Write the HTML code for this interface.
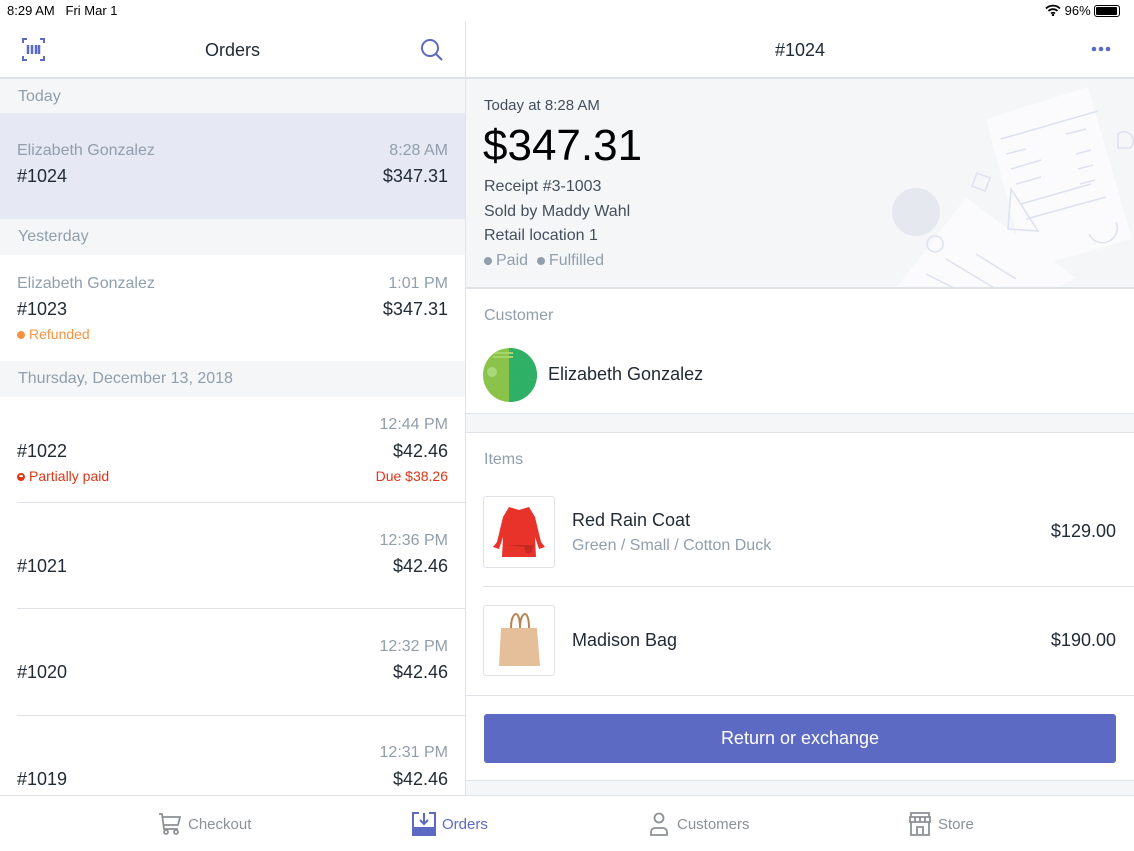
<!DOCTYPE html>
<html><head><meta charset="utf-8"><style>
*{margin:0;padding:0;box-sizing:border-box}
body{width:1134px;height:851px;overflow:hidden;background:#fff;font-family:"Liberation Sans",sans-serif;color:#212b36;position:relative}
.a{position:absolute;white-space:nowrap}
.g{color:#919eab}
.hdr{position:absolute;left:0;width:465px;height:36px;background:#f4f6f8;font-size:16px;color:#919eab;padding:9px 0 0 18px}
.a.r{right:686px;text-align:right}
.sep{position:absolute;height:1px;background:#dfe3e8}
</style></head><body>
<div class="a" style="left:7px;top:3px;font-size:13px;color:#000">8:29 AM&nbsp;&nbsp;&nbsp;Fri Mar 1</div>
<div class="a" style="left:1045px;top:3px;font-size:13px;color:#000">
<svg width="16" height="12" viewBox="0 0 16 12" style="vertical-align:-1px"><path d="M1 4.5a10 10 0 0 1 14 0M3.5 7a6.5 6.5 0 0 1 9 0M6 9.5a3 3 0 0 1 4 0" stroke="#000" stroke-width="1.8" fill="none"/><circle cx="8" cy="11" r="1.2"/></svg> 96%
<span style="display:inline-block;width:26px;height:12px;border:1px solid #000;border-radius:3px;vertical-align:-2px;padding:1px"><span style="display:block;width:21px;height:8px;background:#000;border-radius:1px"></span></span></div>
<div style="position:absolute;left:465px;top:22px;width:1px;height:773px;background:#dfe3e8"></div>
<svg class="a" style="left:22px;top:38px" width="23" height="23" viewBox="0 0 23 23" fill="none" stroke="#5c6ac4" stroke-width="2"><path d="M1 5V1h4M18 1h4v4M22 18v4h-4M5 22H1v-4"/><path d="M6 7v9M10 7v9M14 7v9M17 7v9" stroke-width="2.5"/></svg>
<div class="a" style="left:0;width:465px;top:40px;text-align:center;font-size:18px;color:#212b36">Orders</div>
<svg class="a" style="left:420px;top:38px" width="24" height="24" viewBox="0 0 24 24" fill="none" stroke="#5c6ac4" stroke-width="2"><circle cx="10" cy="10" r="8"/><path d="M16 16l6 6"/></svg>
<div class="sep" style="left:0;top:77px;width:1134px;height:2px;background:#dfe3e8"></div>
<div class="a" style="left:466px;width:668px;top:40px;text-align:center;font-size:18px">#1024</div>
<svg class="a" style="left:1091px;top:46px" width="20" height="6"><circle cx="3" cy="3" r="2.3" fill="#5c6ac4"/><circle cx="10" cy="3" r="2.3" fill="#5c6ac4"/><circle cx="17" cy="3" r="2.3" fill="#5c6ac4"/></svg>

<div class="hdr" style="top:79px">Today</div>
<div style="position:absolute;left:0;top:113px;width:465px;height:106px;background:#e6e8f4"></div>
<div class="a g" style="left:17px;top:142px;font-size:16px">Elizabeth Gonzalez</div>
<div class="a" style="left:17px;top:166px;font-size:18px">#1024</div>
<div class="a r g" style="top:142px;font-size:16px">8:28 AM</div>
<div class="a r" style="top:166px;font-size:18px">$347.31</div>

<div class="hdr" style="top:219px">Yesterday</div>
<div class="a g" style="left:17px;top:275px;font-size:16px">Elizabeth Gonzalez</div>
<div class="a" style="left:17px;top:299px;font-size:18px">#1023</div>
<div class="a" style="left:17px;top:326px;font-size:14px;color:#f49342"><span style="display:inline-block;width:8px;height:8px;border-radius:50%;background:#f49342;margin-right:4px"></span>Refunded</div>
<div class="a r g" style="top:275px;font-size:16px">1:01 PM</div>
<div class="a r" style="top:299px;font-size:18px">$347.31</div>

<div class="hdr" style="top:361px">Thursday, December 13, 2018</div>
<div class="a r g" style="top:416px;font-size:16px">12:44 PM</div>
<div class="a r" style="top:441px;font-size:18px">$42.46</div>
<div class="a" style="left:17px;top:441px;font-size:18px">#1022</div>
<div class="a" style="left:17px;top:468px;font-size:14px;color:#de3618"><span style="display:inline-block;width:8px;height:8px;border-radius:50%;border:2px solid #de3618;margin-right:4px;background:linear-gradient(#fff 0 50%,#de3618 50%)"></span>Partially paid</div>
<div class="a r" style="top:468px;font-size:14px;color:#de3618">Due $38.26</div>
<div class="sep" style="left:17px;top:502px;width:448px"></div>

<div class="a r g" style="top:532px;font-size:16px">12:36 PM</div>
<div class="a r" style="top:556px;font-size:18px">$42.46</div>
<div class="a" style="left:17px;top:556px;font-size:18px">#1021</div>
<div class="sep" style="left:17px;top:608px;width:448px"></div>
<div class="a r g" style="top:638px;font-size:16px">12:32 PM</div>
<div class="a r" style="top:662px;font-size:18px">$42.46</div>
<div class="a" style="left:17px;top:662px;font-size:18px">#1020</div>
<div class="sep" style="left:17px;top:715px;width:448px"></div>
<div class="a r g" style="top:744px;font-size:16px">12:31 PM</div>
<div class="a r" style="top:769px;font-size:18px">$42.46</div>
<div class="a" style="left:17px;top:769px;font-size:18px">#1019</div>

<div style="position:absolute;left:466px;top:79px;width:668px;height:209px;background:#f4f6f8;overflow:hidden">
<svg width="668" height="209" style="position:absolute;left:0;top:0" fill="none" stroke="#dde1f0" stroke-width="1.5">
<circle cx="450" cy="133" r="24" fill="#e6e8f0" stroke="none"/>
<path d="M520 40L622 8 666 160 560 190Z" fill="#fbfbfd" stroke="none"/>
<path d="M535 60l97-28M540 75l20-5M545 90l30-9M550 105l25-7M555 125l70-20M560 140l80-22M600 55l20-5M610 75l15-4M612 90l15-4M614 105l15-4" />
<path d="M430 209l70-90 110 80-20 10Z" fill="#fbfbfd" stroke="none"/>
<path d="M460 195l40 20M480 180l50 30M510 175l40 25"/>
<path d="M545 110l-3 40 30 2Z"/>
<rect x="508" y="96" width="14" height="14" transform="rotate(20 515 103)"/>
<circle cx="469" cy="165" r="8"/>
<path d="M652 55v14h12a7 7 0 0 0-12-14z"/>
<path d="M650 143a14 14 0 0 1-27 12"/>
</svg>
</div>
<div class="a" style="left:484px;top:97px;font-size:15px;color:#454f5b">Today at 8:28 AM</div>
<div class="a" style="left:483px;top:121px;font-size:44px;color:#000">$347.31</div>
<div class="a" style="left:484px;top:178px;font-size:16px;color:#454f5b">Receipt #3-1003</div>
<div class="a" style="left:484px;top:203px;font-size:16px;color:#454f5b">Sold by Maddy Wahl</div>
<div class="a" style="left:484px;top:227px;font-size:16px;color:#454f5b">Retail location 1</div>
<div class="a g" style="left:484px;top:252px;font-size:16px"><span style="display:inline-block;width:8px;height:8px;border-radius:50%;background:#919eab;margin-right:4px"></span>Paid&nbsp;&nbsp;<span style="display:inline-block;width:8px;height:8px;border-radius:50%;background:#919eab;margin-right:4px"></span>Fulfilled</div>
<div class="sep" style="left:466px;top:287px;width:668px;height:2px"></div>

<div class="a g" style="left:484px;top:307px;font-size:16px">Customer</div>
<svg class="a" style="left:483px;top:348px" width="54" height="54" viewBox="0 0 54 54"><defs><clipPath id="c"><circle cx="27" cy="27" r="27"/></clipPath></defs><g clip-path="url(#c)"><rect width="54" height="54" fill="#8bc34a"/><rect x="26" y="0" width="28" height="54" fill="#2eb066"/><path d="M10 5h20M10 9h20" stroke="#a5d66c" stroke-width="2"/><circle cx="9" cy="24" r="5" fill="#a8d77a"/></g></svg>
<div class="a" style="left:548px;top:364px;font-size:18px">Elizabeth Gonzalez</div>
<div style="position:absolute;left:466px;top:413px;width:668px;height:20px;background:#f4f6f8;border-top:1px solid #dfe3e8;border-bottom:1px solid #dfe3e8"></div>

<div class="a g" style="left:484px;top:451px;font-size:16px">Items</div>
<div style="position:absolute;left:483px;top:496px;width:72px;height:72px;border:1px solid #dfe3e8;border-radius:3px;background:#fff"></div>
<svg class="a" style="left:484px;top:497px" width="70" height="70" viewBox="0 0 70 70"><path d="M25 10l10 3 10-3 6 10 6 25 4 5-6 2-4-12 1 20H18l1-20-4 12-6-2 4-5 6-25z" fill="#e8332a"/><path d="M20 48h30l-3 8h-5l-2-6" fill="#c52a22"/></svg>
<div class="a" style="left:572px;top:510px;font-size:18px">Red Rain Coat</div>
<div class="a g" style="left:572px;top:537px;font-size:16px">Green / Small / Cotton Duck</div>
<div class="a" style="right:18px;top:521px;font-size:18px">$129.00</div>
<div class="sep" style="left:483px;top:586px;width:651px"></div>
<div style="position:absolute;left:483px;top:605px;width:72px;height:71px;border:1px solid #dfe3e8;border-radius:3px;background:#fff"></div>
<svg class="a" style="left:484px;top:606px" width="70" height="69" viewBox="0 0 70 69"><path d="M27 22c0-12 4-14 5-14s4 2 4 14M36 22c0-12 4-14 5-14s4 2 4 14" stroke="#b98356" stroke-width="2" fill="none"/><path d="M17 22h36l3 38H15z" fill="#e5bf99"/></svg>
<div class="a" style="left:572px;top:630px;font-size:18px">Madison Bag</div>
<div class="a" style="right:18px;top:630px;font-size:18px">$190.00</div>
<div class="sep" style="left:466px;top:695px;width:668px"></div>
<div class="a" style="left:484px;top:714px;width:632px;height:49px;background:#5c6ac4;border-radius:3px;color:#fff;font-size:18px;text-align:center;line-height:49px">Return or exchange</div>
<div style="position:absolute;left:466px;top:780px;width:668px;height:15px;background:#f4f6f8;border-top:1px solid #dfe3e8"></div>

<div class="sep" style="left:0;top:795px;width:1134px"></div>
<svg class="a" style="left:158px;top:812px" width="24" height="24" viewBox="0 0 24 24" fill="none" stroke="#8c9196" stroke-width="1.8"><path d="M1 2h3l2 15h14M5 5h17l-2 8H6"/><circle cx="8" cy="20" r="2"/><circle cx="18" cy="20" r="2"/></svg>
<div class="a" style="left:188px;top:816px;font-size:15px;color:#8c9196">Checkout</div>
<svg class="a" style="left:412px;top:812px" width="24" height="24" viewBox="0 0 24 24" fill="none" stroke="#5c6ac4" stroke-width="2"><path d="M7 1H1v22h22V1h-6"/><path d="M12 1v11M8 8l4 4 4-4"/><path d="M1 16h22v7H1z" fill="#5c6ac4"/></svg>
<div class="a" style="left:442px;top:816px;font-size:15px;color:#5c6ac4">Orders</div>
<svg class="a" style="left:649px;top:812px" width="20" height="24" viewBox="0 0 20 24" fill="none" stroke="#8c9196" stroke-width="1.8"><circle cx="10" cy="6" r="4.5"/><path d="M2 23v-3a4 4 0 0 1 4-4h8a4 4 0 0 1 4 4v3z"/></svg>
<div class="a" style="left:677px;top:816px;font-size:15px;color:#8c9196">Customers</div>
<svg class="a" style="left:908px;top:812px" width="24" height="24" viewBox="0 0 24 24" fill="none" stroke="#8c9196" stroke-width="1.8"><path d="M3 1h18v4H3zM2 5h20v5H2zM3 10v13h18V10M9 23v-8h6v8M7 5v5M12 5v5M17 5v5"/></svg>
<div class="a" style="left:938px;top:816px;font-size:15px;color:#8c9196">Store</div>
</body></html>
